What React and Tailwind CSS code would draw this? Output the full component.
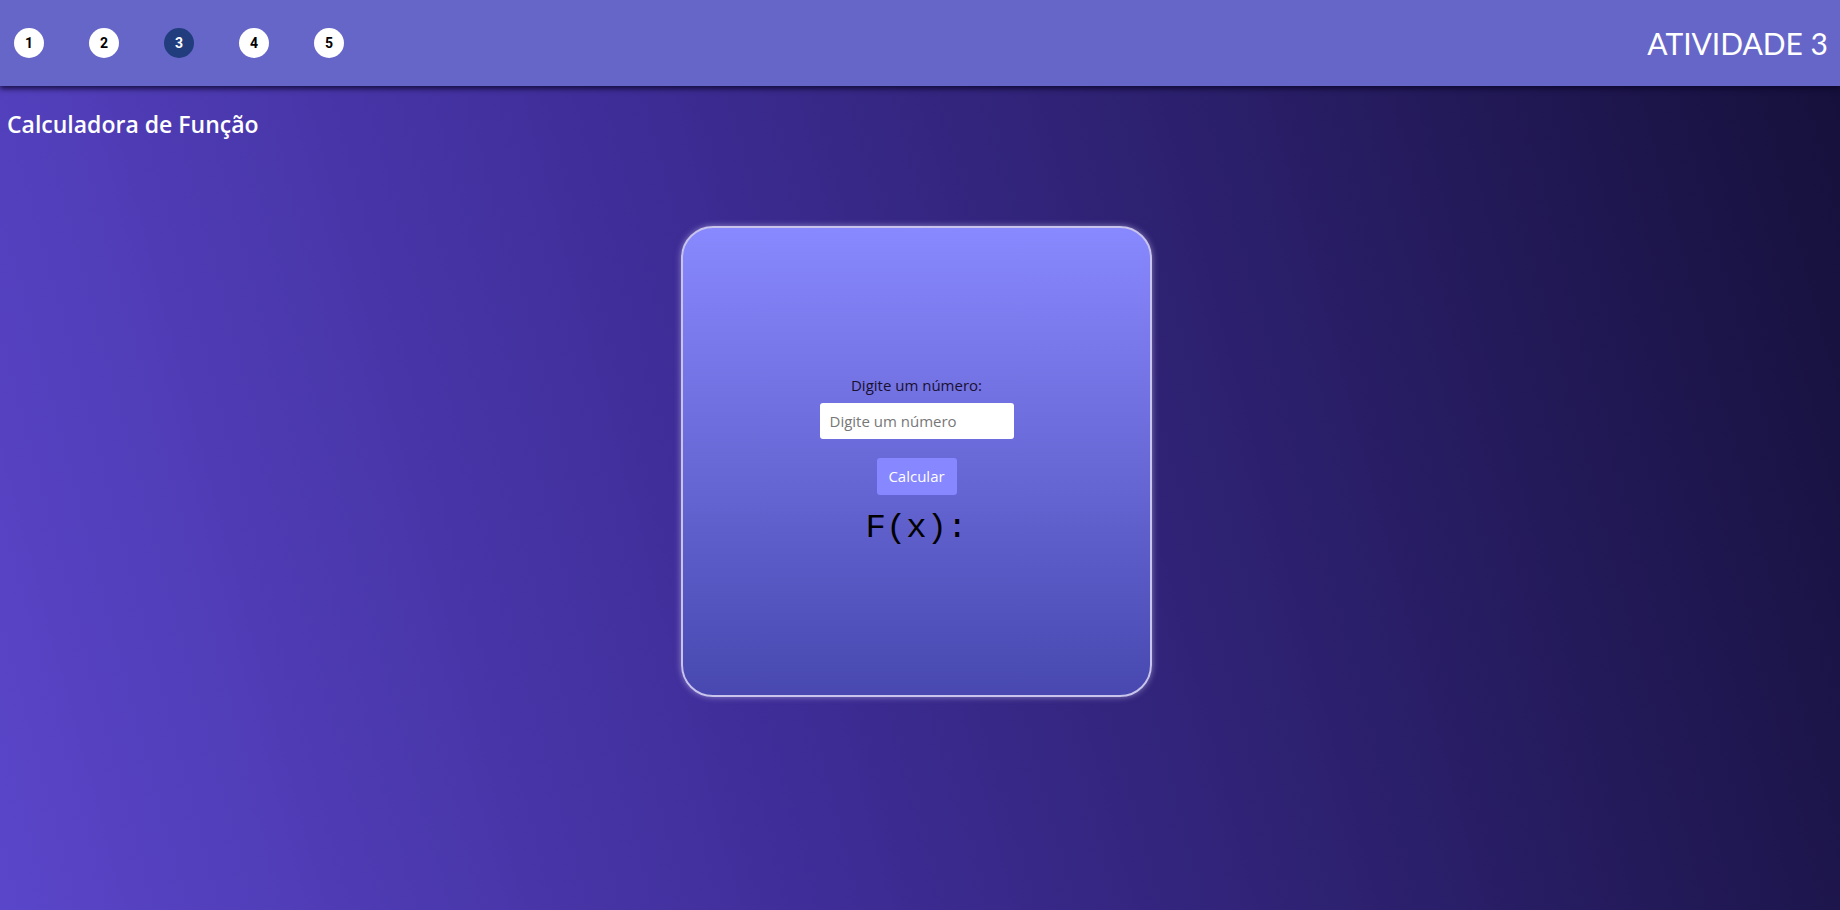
import { useState } from "react";

const steps = [1, 2, 3, 4, 5];

export default function App() {
  const [value, setValue] = useState("");
  const [result, setResult] = useState("");

  const calcular = () => {
    const x = Number(value);
    if (value === "" || Number.isNaN(x)) return setResult("");
    setResult(String(2 * x + 1));
  };

  return (
    <div className="flex min-h-[910px] flex-col bg-[linear-gradient(75deg,#5a46c9_0%,#3e2d97_40%,#15103a_100%)] font-['Open_Sans',sans-serif]">
      <header className="flex h-[86px] items-center justify-between bg-[#6666c9] pl-[14px] pr-[12px] shadow-[0_3px_5px_rgba(10,5,40,0.75)]">
        <nav className="flex gap-[45px]">
          {steps.map((n) => (
            <button
              key={n}
              type="button"
              className={`flex h-[30px] w-[30px] items-center justify-center rounded-full font-['Roboto',sans-serif] text-[14px] font-bold ${n === 3 ? "bg-[#213d7d] text-white" : "bg-white text-black"}`}
            >
              {n}
            </button>
          ))}
        </nav>
        <h2 className="font-['Lato',sans-serif] text-[30px] font-normal text-white">ATIVIDADE 3</h2>
      </header>

      <h1 className="px-[7px] pt-[21px] text-[23px] font-semibold text-white">Calculadora de Função</h1>

      <main className="flex justify-center pt-[84px] pr-[7px]">
        <div className="flex h-[471px] w-[471px] flex-col items-center justify-center rounded-[32px] border-2 border-[#c9c4ec] bg-[linear-gradient(180deg,#8989ff_0%,#4848b0_100%)] shadow-[0_0_6px_rgba(220,215,255,0.5)]">
          <label htmlFor="numero" className="text-[15px] text-[#1a1030]">Digite um número:</label>
          <input
            id="numero"
            value={value}
            onChange={(e) => setValue(e.target.value)}
            placeholder="Digite um número"
            className="mt-[6px] h-[36px] w-[194px] rounded-[3px] bg-white px-[10px] text-[15px] text-gray-800 outline-none placeholder:text-[#777]"
          />
          <button
            type="button"
            onClick={calcular}
            className="mt-[19px] h-[37px] w-[80px] rounded-[3px] bg-[#8787ff] text-[15px] text-white"
          >
            Calcular
          </button>
          <p className="mt-[13px] font-['Courier_New','Liberation_Mono',monospace] text-[34px] leading-[40px] text-black">F(x):{result && ` ${result}`}</p>
        </div>
      </main>
    </div>
  );
}
